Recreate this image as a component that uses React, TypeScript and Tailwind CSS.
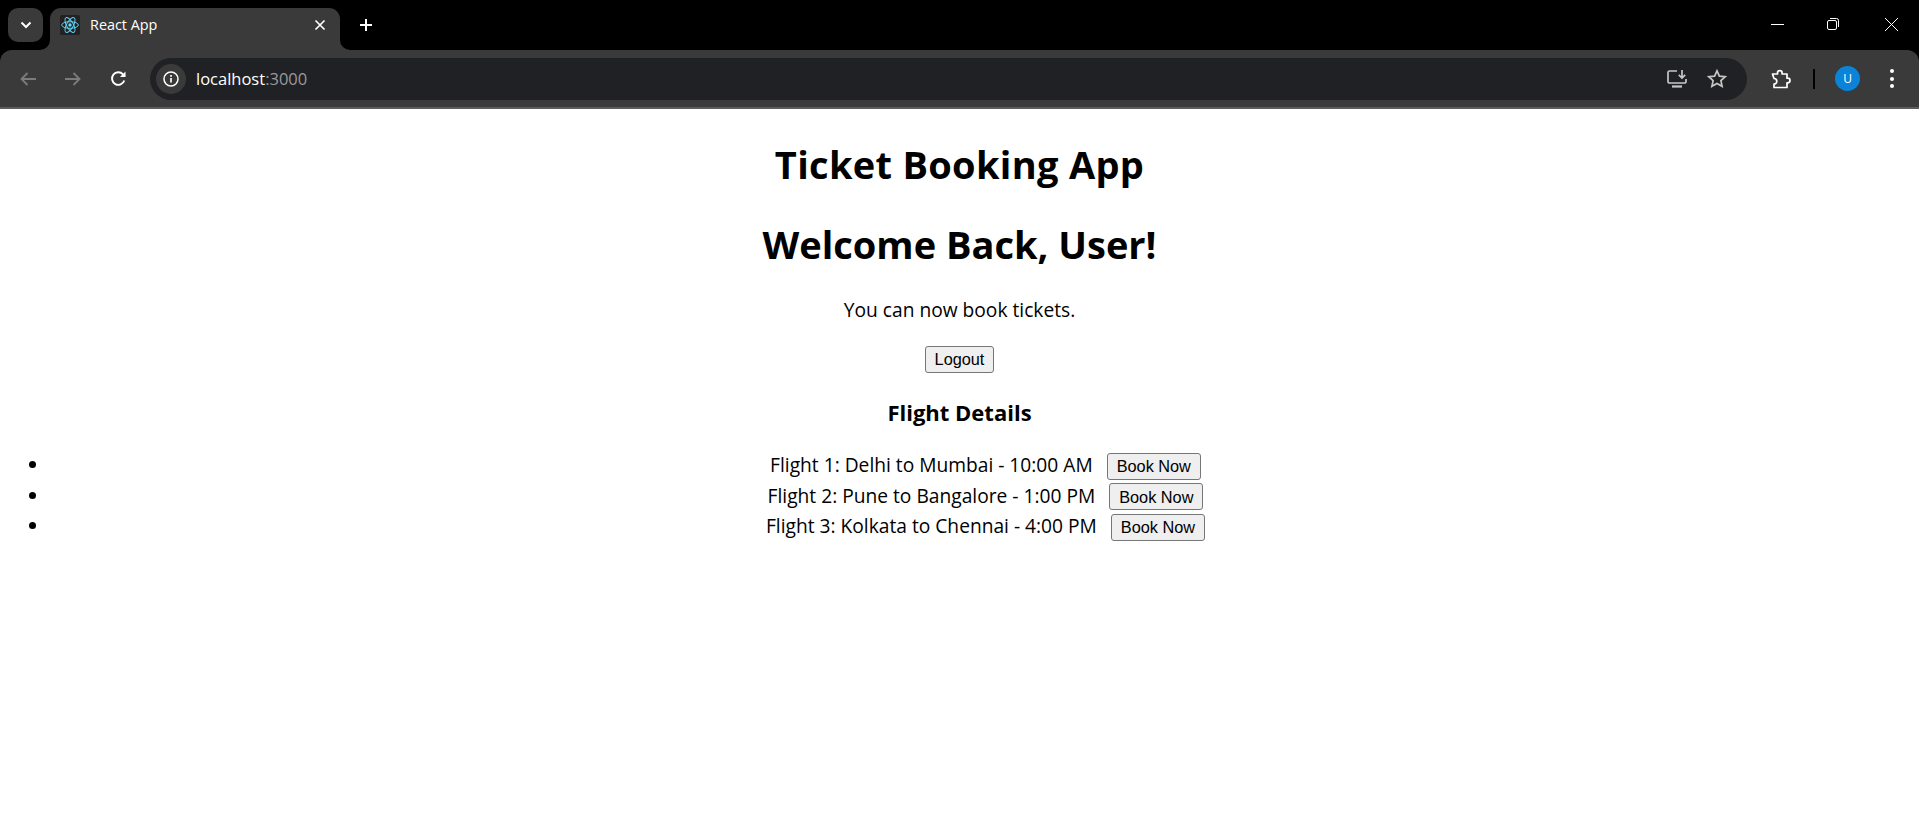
const uiFont = "font-['Open_Sans','Noto_Sans',sans-serif]";

function ReactLogo() {
    return (
        <svg width="20" height="20" viewBox="-12 -12 24 24" fill="none" stroke="#61dafb" strokeWidth="1.1">
            <rect x="-12" y="-12" width="24" height="24" rx="2" fill="#222222" stroke="none" />
            <circle r="2" fill="#61dafb" stroke="none" />
            <ellipse rx="10" ry="4" />
            <ellipse rx="10" ry="4" transform="rotate(60)" />
            <ellipse rx="10" ry="4" transform="rotate(120)" />
        </svg>
    );
}

function TabFlare({ side }: { side: 'left' | 'right' }) {
    return (
        <svg
            width="10"
            height="10"
            viewBox="0 0 10 10"
            className={side === 'left' ? 'absolute bottom-0 left-[-10px]' : 'absolute bottom-0 right-[-10px]'}
        >
            <path d={side === 'left' ? 'M10 0V10H0A10 10 0 0 0 10 0Z' : 'M0 0V10H10A10 10 0 0 1 0 0Z'} fill="#3a3a3a" />
        </svg>
    );
}

function TabStrip() {
    return (
        <div className="h-[50px] bg-black flex items-start pl-2 shrink-0">
            <div className="w-[35px] h-[34px] mt-2 rounded-[10px] bg-[#3a3a3a] flex items-center justify-center">
                <svg width="12" height="8" viewBox="0 0 12 8" fill="none" stroke="#fff" strokeWidth="2">
                    <path d="M1.500 1.500L6 6l4.500-4.500" />
                </svg>
            </div>
            <div className="relative ml-[7px] w-[290px] h-[42px] mt-2 pb-[8px] bg-[#3a3a3a] rounded-t-[11px] flex items-center pl-[10px] pr-[14px]">
                <TabFlare side="left" />
                <TabFlare side="right" />
                <ReactLogo />
                <span className={`ml-[10px] flex-1 text-[14.400px] text-white ${uiFont}`}>React App</span>
                <svg width="12" height="12" viewBox="0 0 12 12" fill="none" stroke="#fff" strokeWidth="1.700">
                    <path d="M1.500 1.500l9 9M10.500 1.500l-9 9" />
                </svg>
            </div>
            <svg width="14" height="14" viewBox="0 0 14 14" fill="none" stroke="#fff" strokeWidth="2" className="ml-[19px] mt-[18px]">
                <path d="M7 1v12M1 7h12" />
            </svg>
            <div className="ml-auto flex items-center h-[48px] pr-[20px]">
                <div className="w-[13px] h-px bg-white" />
                <svg width="14" height="14" viewBox="0 0 14 14" fill="none" stroke="#fff" className="ml-[42px]">
                    <rect x="1.500" y="3.500" width="9" height="9" rx="1.500" />
                    <path d="M4 1.500h6.500a2 2 0 0 1 2 2V10" />
                </svg>
                <svg width="15" height="15" viewBox="0 0 15 15" fill="none" stroke="#fff" className="ml-[44px]">
                    <path d="M1 1l13 13M14 1L1 14" />
                </svg>
            </div>
        </div>
    );
}

function Toolbar() {
    return (
        <div className="h-[59px] bg-black shrink-0">
            <div className="h-full bg-[#3a3a3a] rounded-t-[12px] border-b-[2px] border-[#5c5c5c] flex items-center">
                <svg width="16" height="14" viewBox="0 0 16 14" fill="none" stroke="#7c7c7c" strokeWidth="1.800" className="ml-[20px]">
                    <path d="M16 7H2M7.500 1L1.500 7l6 6" />
                </svg>
                <svg width="16" height="14" viewBox="0 0 16 14" fill="none" stroke="#7c7c7c" strokeWidth="1.800" className="ml-[29px]">
                    <path d="M0 7h14M8.500 1l6 6-6 6" />
                </svg>
                <svg width="17" height="17" viewBox="0 0 17 17" fill="none" stroke="#fff" strokeWidth="1.900" className="ml-[29px]">
                    <path d="M14.300 10.500A6.300 6.300 0 1 1 13 4.300L15 6.300" />
                    <path d="M15.500 1.500v5.600H9.900" fill="#fff" stroke="none" />
                </svg>
                <div className="ml-[23px] h-[42px] w-[1597px] rounded-full bg-[#202124] flex items-center pl-[6px]">
                    <div className="w-[30px] h-[30px] rounded-full bg-[#3a3a3a] flex items-center justify-center">
                        <svg width="16" height="16" viewBox="0 0 16 16" fill="none" stroke="#fff" strokeWidth="1.500">
                            <circle cx="8" cy="8" r="7" />
                            <path d="M8 7v4.500M8 4v1.800" strokeWidth="1.700" />
                        </svg>
                    </div>
                    <span className={`ml-[10px] mt-[2px] text-[16.500px] text-white ${uiFont}`}>
                        localhost<span className="text-[#9a9a9a]">:3000</span>
                    </span>
                    <svg width="21" height="19" viewBox="0 0 21 19" fill="none" stroke="#c4c7c5" strokeWidth="1.700" className="ml-auto">
                        <path d="M10 2H2.500A1.500 1.500 0 0 0 1 3.500v9A1.500 1.500 0 0 0 2.500 14h15a1.500 1.500 0 0 0 1.500-1.500V10" />
                        <path d="M5 17.500h10" strokeWidth="2.200" />
                        <path d="M15 1v7.500M11.800 5.800L15 9l3.200-3.200" />
                    </svg>
                    <svg width="20" height="19" viewBox="0 0 20 19" fill="none" stroke="#c4c7c5" strokeWidth="1.700" className="ml-[19px] mr-[20px]">
                        <path d="M10 1.800l2.400 5.300 5.800.6-4.300 3.900 1.200 5.700-5.100-2.900-5.100 2.900 1.200-5.700-4.300-3.900 5.800-.6z" />
                    </svg>
                </div>
                <svg width="20" height="20" viewBox="0 0 20 20" fill="none" stroke="#fff" strokeWidth="1.700" strokeLinejoin="round" className="ml-[24px]">
                    <path d="M1.500 5h5V4a2.300 2.300 0 0 1 4.600 0v1h4.900v4.200h.7a2.300 2.300 0 0 1 0 4.600H16v4.700H3v-3.400a2.800 2.800 0 0 0 0-5.600z" />
                </svg>
                <div className="ml-[22px] w-[2px] h-[20px] bg-black" />
                <div className={`ml-[20px] w-[25px] h-[25px] rounded-full bg-[#0b83d9] flex items-center justify-center text-white text-[12px] ${uiFont}`}>
                    U
                </div>
                <div className="ml-[30px] flex flex-col gap-[3.500px]">
                    <div className="w-[4px] h-[4px] rounded-full bg-white" />
                    <div className="w-[4px] h-[4px] rounded-full bg-white" />
                    <div className="w-[4px] h-[4px] rounded-full bg-white" />
                </div>
            </div>
        </div>
    );
}

function PlainButton({ label, className }: { label: string; className?: string }) {
    return (
        <button className={`h-[27px] px-[9px] rounded-[3px] border border-[#767676] bg-[#efefef] text-black text-[16.300px] leading-none font-['Liberation_Sans',Arial,sans-serif] ${className ?? ''}`}>
            {label}
        </button>
    );
}

const flights = [
    'Flight 1: Delhi to Mumbai - 10:00 AM',
    'Flight 2: Pune to Bangalore - 1:00 PM',
    'Flight 3: Kolkata to Chennai - 4:00 PM',
];

export default function App() {
    return (
        <div className="h-[824px] w-[1919px] overflow-hidden bg-white flex flex-col">
            <TabStrip />
            <Toolbar />
            <div className={`text-black text-center ${uiFont}`}>
                <h1 className="mt-[33px] text-[38px] leading-[44px] font-bold tracking-[0.3px]">Ticket Booking App</h1>
                <h1 className="mt-[36px] text-[38px] leading-[44px] font-bold">Welcome Back, User!</h1>
                <p className="mt-[31px] text-[19.200px] leading-[26px]">You can now book tickets.</p>
                <div className="mt-[23px] flex justify-center">
                    <PlainButton label="Logout" />
                </div>
                <h3 className="mt-[25px] text-[22px] leading-[28px] font-bold">Flight Details</h3>
                <ul className="mt-[24px] pl-[50px] list-disc">
                    {flights.map((flight) => (
                        <li key={flight} className="h-[30.500px] pl-[2px] text-[19.200px] leading-[30px]">
                            {flight}
                            <PlainButton label="Book Now" className="ml-[14px]" />
                        </li>
                    ))}
                </ul>
            </div>
        </div>
    );
}
